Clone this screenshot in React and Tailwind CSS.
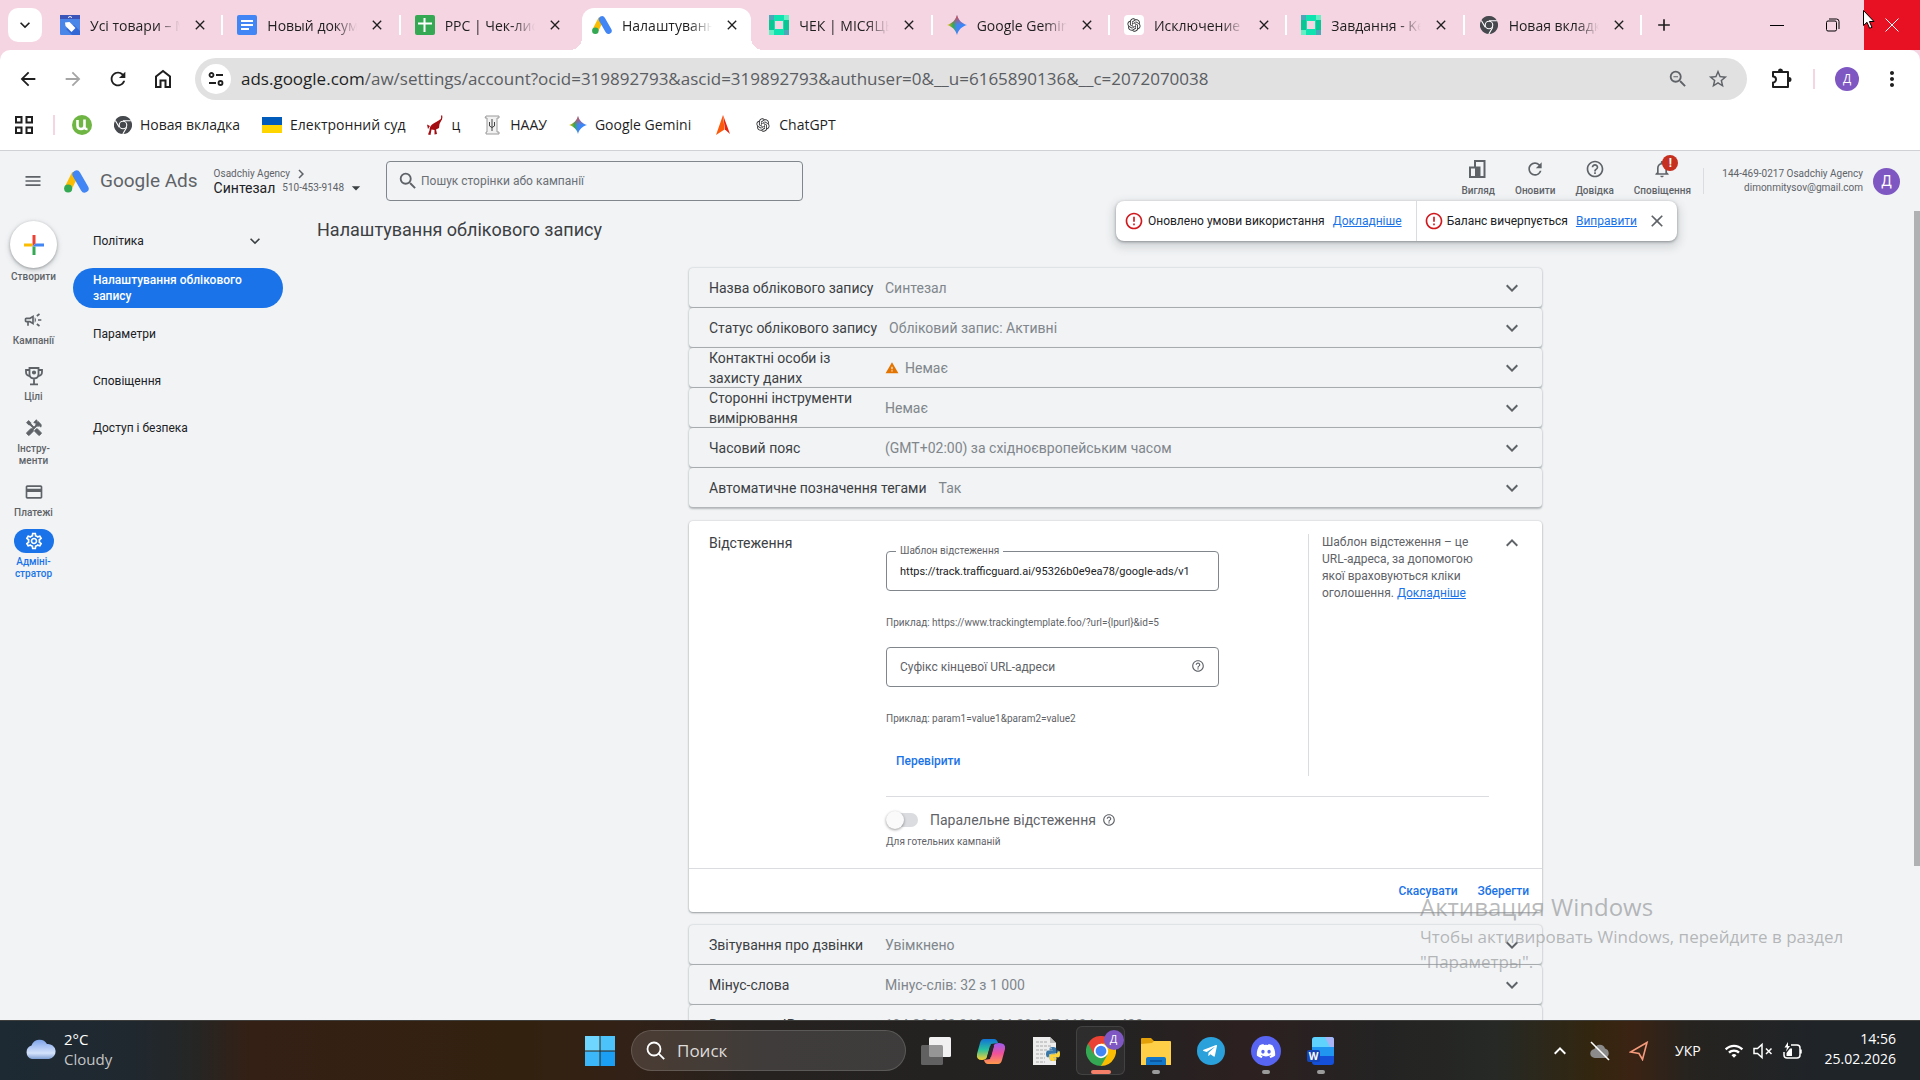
import { useState } from "react";
import {
  MdArrowBack,
  MdArrowForward,
  MdRefresh,
  MdMoreVert,
  MdZoomOut,
  MdStarBorder,
  MdClose,
  MdAdd,
  MdMenu,
  MdSearch,
  MdExpandMore,
  MdExpandLess,
  MdChevronRight,
  MdArrowDropDown,
  MdHelpOutline,
  MdErrorOutline,
  MdNotificationsNone,
  MdOutlineCampaign,
  MdOutlineSettings,
  MdCreditCard,
  MdWarning,
  MdWifi,
} from "react-icons/md";
import { RiOpenaiFill } from "react-icons/ri";
import { FaDiscord, FaTelegramPlane, FaPython } from "react-icons/fa";

const ChromeGlyph = ({ className, color }) => {
  const red = color ? "#ea4335" : "#46494d";
  const yellow = color ? "#fbbc04" : "#46494d";
  const green = color ? "#34a853" : "#46494d";
  return (
    <svg className={className} viewBox="0 0 48 48">
      <path d="M24 24 3.2 12A24 24 0 0 1 44.8 12Z" fill={red} />
      <path d="M24 24 44.8 12A24 24 0 0 1 24 48Z" fill={yellow} />
      <path d="M24 24 24 48A24 24 0 0 1 3.2 12Z" fill={green} />
      <path d="M24 12h20.8L34.4 30Z" fill={yellow} />
      <path d="M34.4 30 24 48 13.6 30Z" fill={green} />
      <path d="M13.6 30 3.2 12 24 12Z" fill={red} />
      {!color && (
        <path
          d="M24 12.5h21M34 30 23.5 48M14 30 3.5 12"
          stroke="#fff"
          strokeWidth="3"
        />
      )}
      <circle cx="24" cy="24" r="11.5" fill="#fff" />
      <circle cx="24" cy="24" r="8.6" fill={color ? "#4285f4" : "#46494d"} />
    </svg>
  );
};

const AdsLogo = ({ className }) => (
  <svg className={className} viewBox="0 0 48 44">
    <path d="M22 7 9 33" stroke="#fbbc04" strokeWidth="14" />
    <path
      d="M24 8.5 39.5 35.5"
      stroke="#4285f4"
      strokeWidth="15.5"
      strokeLinecap="round"
    />
    <circle cx="8" cy="35.5" r="7.8" fill="#34a853" />
  </svg>
);

const GeminiIcon = ({ className }) => (
  <svg className={className} viewBox="0 0 24 24">
    <defs>
      <linearGradient id="gemini" x1="0" y1="0.5" x2="1" y2="0.5">
        <stop offset="0" stopColor="#fbbc04" />
        <stop offset="0.3" stopColor="#34a853" />
        <stop offset="0.5" stopColor="#4285f4" />
        <stop offset="1" stopColor="#3186ff" />
      </linearGradient>
      <linearGradient id="geminiTop" x1="0" y1="0" x2="0" y2="1">
        <stop offset="0" stopColor="#ea4335" />
        <stop offset="0.5" stopColor="#ea4335" stopOpacity="0" />
      </linearGradient>
    </defs>
    <path
      d="M12 0C13.500 6 18 10.500 24 12 18 13.500 13.500 18 12 24 10.500 18 6 13.500 0 12 6 10.500 10.500 6 12 0Z"
      fill="url(#gemini)"
    />
    <path
      d="M12 0C13.500 6 18 10.500 24 12 18 13.500 13.500 18 12 24 10.500 18 6 13.500 0 12 6 10.500 10.500 6 12 0Z"
      fill="url(#geminiTop)"
    />
  </svg>
);

const MerchantIcon = () => (
  <svg className="size-5" viewBox="0 0 20 20">
    <rect width="20" height="20" rx="1" fill="#4a86e8" />
    <path d="M0 0h20v4H0Z" fill="#3c55b8" />
    <path d="M8 2.500q2-2 4 0" stroke="#fff" fill="none" />
    <path d="m14 10 6 6v4h-8l-6-6Z" fill="#3367d6" />
    <path d="M5 7.500 9.500 7l6 6-4 4-6-6Z" fill="#fff" />
  </svg>
);

const DocsIcon = () => (
  <svg className="size-5" viewBox="0 0 20 20">
    <rect width="20" height="20" rx="2" fill="#4285f4" />
    <path d="M4 6h12M4 10h12M4 14h8" stroke="#fff" strokeWidth="2" />
  </svg>
);

const SheetsIcon = () => (
  <svg className="size-5" viewBox="0 0 20 20">
    <rect width="20" height="20" rx="2" fill="#34a853" />
    <path d="M3 8.500h14M9.500 3v14" stroke="#fff" strokeWidth="2" />
  </svg>
);

const KeepIcon = () => (
  <svg className="size-5" viewBox="0 0 20 20">
    <rect width="20" height="20" rx="1.500" fill="#0fe3b0" />
    <path d="M0 5h5v10H0ZM15 5h5v10h-5Z" fill="#08c795" />
    <path d="M0 0h5v5H0ZM15 15h5v5h-5Z" fill="#4aa8b8" />
    <path d="M15 0h5v5h-5ZM0 15h5v5H0Z" fill="#63f0c4" />
    <rect x="6" y="6" width="8" height="8" fill="#f6d5e3" />
  </svg>
);

const OpenAiTab = () => (
  <span className="flex size-5 items-center justify-center rounded bg-white">
    <RiOpenaiFill className="size-4 text-[#2f3033]" />
  </span>
);

const tabs = [
  { id: 1, title: "Усі товари – Merchant", icon: <MerchantIcon /> },
  { id: 2, title: "Новый документ", icon: <DocsIcon /> },
  { id: 3, title: "PPC | Чек-лист", icon: <SheetsIcon /> },
  {
    id: 4,
    title: "Налаштування",
    icon: <AdsLogo className="size-5" />,
    active: true,
  },
  { id: 5, title: "ЧЕК | МІСЯЦЬ", icon: <KeepIcon /> },
  { id: 6, title: "Google Gemini", icon: <GeminiIcon className="size-5" /> },
  { id: 7, title: "Исключение", icon: <OpenAiTab /> },
  { id: 8, title: "Завдання - Keep", icon: <KeepIcon /> },
  { id: 9, title: "Новая вкладка", icon: <ChromeGlyph className="size-[18px]" /> },
];

const Tab = ({ tab, divider }) => (
  <div className="relative min-w-0 flex-1 pt-2">
    {tab.active && (
      <div className="absolute inset-x-1 top-2 bottom-0 rounded-t-xl bg-white">
        <div className="absolute bottom-0 -left-3 size-3 bg-[radial-gradient(circle_at_0_0,#f6d5e3_12px,#fff_12px)]" />
        <div className="absolute -right-3 bottom-0 size-3 bg-[radial-gradient(circle_at_100%_0,#f6d5e3_12px,#fff_12px)]" />
      </div>
    )}
    <div className="relative flex h-[34px] items-center pl-3.5">
      <span className="flex size-5 shrink-0 items-center justify-center">
        {tab.icon}
      </span>
      <span className="ml-2.5 w-[90px] overflow-hidden text-[14px] whitespace-nowrap text-[#1f1f1f] [mask-image:linear-gradient(to_right,black_75%,transparent)]">
        {tab.title}
      </span>
      <button type="button" aria-label="Закрити" className="ml-2.5 p-0.5">
        <MdClose className="size-4 text-[#1f1f1f]" />
      </button>
      {divider && <span className="absolute right-0 h-5 w-0.5 bg-white" />}
    </div>
  </div>
);

const TabStrip = () => (
  <div className="flex h-[50px] shrink-0 bg-[#f6d5e3]">
    <button
      type="button"
      aria-label="Пошук вкладок"
      className="mt-2 ml-2 flex h-[34px] w-[34px] shrink-0 items-center justify-center rounded-[10px] bg-white"
    >
      <MdExpandMore className="size-5 text-[#1f1f1f]" />
    </button>
    <div className="ml-1 flex max-w-[1596px] flex-1">
      {tabs.map((tab) => (
        <Tab key={tab.id} tab={tab} divider={tab.id !== 3 && tab.id !== 4} />
      ))}
    </div>
    <button type="button" aria-label="Нова вкладка" className="ml-3">
      <MdAdd className="size-5 text-[#1f1f1f]" />
    </button>
    <div className="ml-auto flex">
      <button
        type="button"
        aria-label="Згорнути"
        className="flex w-14 items-center justify-center"
      >
        <span className="h-px w-3.5 bg-black" />
      </button>
      <button
        type="button"
        aria-label="Відновити"
        className="mr-[3px] flex w-14 items-center justify-center"
      >
        <svg className="size-3.5" viewBox="0 0 14 14" fill="none" stroke="#000">
          <rect x="0.5" y="3" width="10" height="10" rx="1.500" />
          <path d="M3 1h7.500a2.500 2.500 0 0 1 2.500 2.500V11" />
        </svg>
      </button>
      <button
        type="button"
        aria-label="Закрити вікно"
        className="relative flex w-14 items-center justify-center bg-[#e81123]"
      >
        <svg className="size-3.5" viewBox="0 0 14 14" stroke="#fff">
          <path d="m0.500 0.500 13 13M13.500 0.500l-13 13" />
        </svg>
        <svg
          className="absolute top-2.5 -left-px h-5 w-3"
          viewBox="0 0 12 20"
        >
          <path
            d="M0.500 0.500v15l3.500-3.200 2.600 6 2.400-1-2.600-5.800h4.600Z"
            fill="#fff"
            stroke="#000"
          />
        </svg>
      </button>
    </div>
  </div>
);

const Toolbar = () => (
  <div className="bg-[#f6d5e3]">
    <div className="flex h-[50px] items-center rounded-t-[10px] bg-white pt-2">
      <div className="flex w-[195px] shrink-0 items-center gap-[23px] pl-[17px] text-[#1f1f1f]">
        <button type="button" aria-label="Назад">
          <MdArrowBack className="size-[22px]" />
        </button>
        <button type="button" aria-label="Вперед" className="text-[#a5a5a5]">
          <MdArrowForward className="size-[22px]" />
        </button>
        <button type="button" aria-label="Оновити сторінку">
          <MdRefresh className="size-[22px]" />
        </button>
        <button type="button" aria-label="Головна">
          <svg
            className="size-[22px]"
            viewBox="0 0 22 22"
            fill="none"
            stroke="#1f1f1f"
            strokeWidth="2"
          >
            <path d="M4 8.500 11 3l7 5.500V19h-4.500v-6.500h-5V19H4Z" />
          </svg>
        </button>
      </div>
      <div className="flex h-[42px] min-w-0 flex-1 items-center rounded-full bg-[#e1e1e1] pr-[18px] pl-1.5">
        <span className="flex size-[30px] shrink-0 items-center justify-center rounded-full bg-white">
          <svg
            className="size-4"
            viewBox="0 0 16 16"
            fill="none"
            stroke="#1f1f1f"
            strokeWidth="1.800"
          >
            <circle cx="3.500" cy="4" r="2" />
            <path d="M8 4h7M1 12h7" />
            <circle cx="12.500" cy="12" r="2" />
          </svg>
        </span>
        <p className="ml-2.5 min-w-0 flex-1 truncate text-[17px] text-[#5a5d61]">
          <span className="text-[#1f1f1f]">ads.google.com</span>
          /aw/settings/account?ocid=319892793&amp;ascid=319892793&amp;authuser=0&amp;__u=6165890136&amp;__c=2072070038
        </p>
        <MdZoomOut className="size-[22px] text-[#5f6368]" />
        <MdStarBorder className="ml-[18px] size-[22px] text-[#5f6368]" />
      </div>
      <div className="flex w-[173px] shrink-0 items-center pl-[22px]">
        <svg
          className="size-6"
          viewBox="0 0 24 24"
          fill="none"
          stroke="#1f1f1f"
          strokeWidth="2"
          strokeLinejoin="round"
        >
          <path d="M4 5h15v15H4v-4.500a3 3 0 0 0 0-6Z" />
          <path
            d="M9 4a2.500 2.500 0 0 1 5 0ZM20 10a2.500 2.500 0 0 1 0 5Z"
            fill="#1f1f1f"
            stroke="none"
          />
        </svg>
        <span className="ml-5 h-5 w-0.5 bg-[#f6d5e3]" />
        <span className="ml-5 flex size-6 items-center justify-center rounded-full bg-[#7e57c2] text-xs text-white">
          Д
        </span>
        <MdMoreVert className="ml-[21px] size-6 text-[#1f1f1f]" />
      </div>
    </div>
  </div>
);

const Bookmark = ({ icon, label }) => (
  <a href="#" className="flex items-center gap-2">
    {icon}
    {label}
  </a>
);

const Bookmarks = () => (
  <div className="flex h-[51px] shrink-0 items-center border-b border-[#d0d1d4] bg-white pb-px pl-[15px] text-[14px] text-[#1f1f1f]">
    <svg
      className="size-[18px]"
      viewBox="0 0 18 18"
      fill="none"
      stroke="#1f1f1f"
      strokeWidth="2"
    >
      <path d="M1 1h5.500v5.500H1ZM11.500 1H17v5.500h-5.500ZM1 11.500h5.500V17H1ZM11.500 11.500H17V17h-5.500Z" />
    </svg>
    <span className="ml-5 h-5 w-0.5 bg-[#f6d5e3]" />
    <div className="ml-[17px] flex items-center gap-[22px]">
      <Bookmark
        icon={
          <svg className="size-5" viewBox="0 0 20 20">
            <circle cx="10" cy="10" r="10" fill="#6fb544" />
            <path
              d="M5.500 5v5.500q0 3.500 3.500 3.500t3.500-3.500V4.500v7q0 3 3 2.500"
              fill="none"
              stroke="#fff"
              strokeWidth="2.600"
            />
          </svg>
        }
      />
      <Bookmark
        icon={<ChromeGlyph className="size-[18px]" />}
        label="Новая вкладка"
      />
      <Bookmark
        icon={
          <svg className="h-4 w-5" viewBox="0 0 20 16">
            <path d="M0 0h20v8H0Z" fill="#005bbb" />
            <path d="M0 8h20v8H0Z" fill="#ffd500" />
          </svg>
        }
        label="Електронний суд"
      />
      <Bookmark
        icon={
          <svg className="h-5 w-4" viewBox="2 0 16 20">
            <path
              d="M14.500 5q1-2 1.500 1l-1.500 3-0.500 4-3 1.500 1 4.500-2.500 0.500v-4.500l-3-0.500L5.500 20l-2.500-0.500 1.500-4q0-5 4-7Z"
              fill="#a30d12"
            />
            <path d="M2 9.500 5 11l-2 3Z" fill="#a30d12" />
            <path
              d="M15 6q2.500-2 1.500-5.500"
              stroke="#a30d12"
              strokeWidth="1.200"
              fill="none"
            />
          </svg>
        }
        label="ц"
      />
      <Bookmark
        icon={
          <svg className="size-5" viewBox="0 0 20 20">
            <path
              d="M4 1h13v2h-2v14h2v2H4v-2h1V3H3Z"
              fill="#f1f1f1"
              stroke="#9a9a9a"
            />
            <path
              d="M10 4v12M7.500 7v4l2.500 1.500 2.500-1.500V7"
              fill="none"
              stroke="#444"
            />
          </svg>
        }
        label="НААУ"
      />
      <Bookmark
        icon={<GeminiIcon className="size-[18px]" />}
        label="Google Gemini"
      />
      <Bookmark
        icon={
          <svg className="size-5" viewBox="0 0 20 20">
            <path d="m10 0 7 19-5-4.500Z" fill="#e8200c" />
            <path d="m10 0 1.500 14.500L3 20Z" fill="#fb5a0c" />
          </svg>
        }
      />
      <Bookmark
        icon={<RiOpenaiFill className="size-4 text-[#2f3033]" />}
        label="ChatGPT"
      />
    </div>
  </div>
);

const HeaderAction = ({ icon, label, badge }) => (
  <button
    type="button"
    className="relative flex flex-col items-center text-[10px] leading-3 font-medium text-[#5f6368]"
  >
    <span className="mb-1.5 flex size-5 items-center justify-center">
      {icon}
    </span>
    {label}
    {badge && (
      <span className="absolute -top-1 left-1/2 flex size-4 items-center justify-center rounded-full bg-[#c5301f] text-xs font-bold text-white">
        !
      </span>
    )}
  </button>
);

const AdsHeader = () => (
  <header className="relative flex h-[60px] shrink-0 items-center pr-5 pl-[23px]">
    <button type="button" aria-label="Меню">
      <MdMenu className="size-5 text-[#5f6368]" />
    </button>
    <AdsLogo className="ml-[21px] h-[23px] w-[25px]" />
    <span className="ml-[11px] text-[19px] text-[#5f6368]">Google Ads</span>
    <div className="ml-4 leading-3.5">
      <div className="flex h-3.5 items-center text-[10px] text-[#5f6368]">
        Osadchiy Agency
        <MdChevronRight className="ml-0.5 size-[18px]" />
      </div>
      <div className="flex h-3.5 items-center text-[14px] text-[#202124]">
        Синтезал
        <span className="ml-[7px] text-[10px] text-[#5f6368]">
          510-453-9148
        </span>
        <MdArrowDropDown className="ml-0.5 size-5 text-[#3c4043]" />
      </div>
    </div>
    <label className="ml-5 flex h-10 w-[417px] items-center rounded border border-[#80868b] pl-2.5">
      <MdSearch className="size-[22px] shrink-0 text-[#5f6368]" />
      <input
        type="text"
        placeholder="Пошук сторінки або кампанії"
        className="ml-0.5 w-full bg-transparent text-[12px] outline-none placeholder:text-[#6b7075]"
      />
    </label>
    <div className="mt-2 ml-auto flex gap-5 self-start">
      <HeaderAction
        icon={
          <svg className="size-5" viewBox="0 0 20 20">
            <path
              d="M2 8.500h5V2h9.500v16H2Z"
              fill="none"
              stroke="#5f6368"
              strokeWidth="2"
            />
            <path d="M7 7.500h5.500V18H7Z" fill="#5f6368" />
          </svg>
        }
        label="Вигляд"
      />
      <HeaderAction icon={<MdRefresh className="size-5" />} label="Оновити" />
      <HeaderAction
        icon={<MdHelpOutline className="size-5" />}
        label="Довідка"
      />
      <HeaderAction
        icon={<MdNotificationsNone className="size-5" />}
        label="Сповіщення"
        badge
      />
    </div>
    <div className="ml-3 h-[26px] w-px bg-[#dadce0]" />
    <div className="w-[159px] text-right text-[10px] leading-3.5 text-[#5f6368]">
      144-469-0217 Osadchiy Agency
      <br />
      dimonmitysov@gmail.com
    </div>
    <span className="ml-2.5 flex size-[27px] items-center justify-center rounded-full bg-[#7e57c2] text-sm text-white">
      Д
    </span>
    <Alerts />
  </header>
);

const Alerts = () => (
  <div className="absolute top-[50px] right-[243px] z-10 flex h-10 items-center rounded-lg bg-white text-[12px] text-[#202124] shadow-[0_1px_3px_rgba(60,64,67,0.5),0_4px_8px_3px_rgba(60,64,67,0.15)]">
    <div className="flex h-full items-center border-r border-[#dadce0] pr-3.5 pl-2">
      <MdErrorOutline className="mr-1 size-5 text-[#d01a1e]" />
      Оновлено умови використання
      <a href="#" className="ml-2 text-[#1a73e8] underline">
        Докладніше
      </a>
    </div>
    <div className="flex items-center pr-2.5 pl-[7px]">
      <MdErrorOutline className="mr-[3px] size-5 text-[#d01a1e]" />
      Баланс вичерпується
      <a href="#" className="ml-2 text-[#1a73e8] underline">
        Виправити
      </a>
      <button type="button" aria-label="Закрити" className="ml-2.5">
        <MdClose className="size-5 text-[#5f6368]" />
      </button>
    </div>
  </div>
);

const RailItem = ({ icon, children, active }) => (
  <a
    href="#"
    className={
      active
        ? "flex flex-col items-center text-center text-[10px] leading-3 font-medium text-[#1a73e8]"
        : "flex flex-col items-center text-center text-[10px] leading-3 font-medium text-[#5f6368]"
    }
  >
    <span
      className={
        active
          ? "mb-[3px] flex h-6 w-10 items-center justify-center rounded-full bg-[#1a73e8] text-white"
          : "mb-[3px] flex h-6 w-10 items-center justify-center"
      }
    >
      {icon}
    </span>
    {children}
  </a>
);

const Rail = () => (
  <nav className="flex w-[67px] shrink-0 flex-col items-center pt-2.5">
    <button
      type="button"
      className="flex flex-col items-center text-[10px] leading-3 font-medium text-[#5f6368]"
    >
      <span className="mb-[3px] flex size-[47px] items-center justify-center rounded-full bg-white shadow-[0_1px_3px_rgba(60,64,67,0.4),0_2px_6px_rgba(60,64,67,0.2)]">
        <svg className="size-5" viewBox="0 0 20 20">
          <path d="M8.500 0h3v8.500l-3 3Z" fill="#ea4335" />
          <path d="M0 8.500h8.500v3H0Z" fill="#fbbc04" />
          <path d="M8.500 11.500h3V20h-3Z" fill="#34a853" />
          <path d="M11.500 8.500H20v3H8.500Z" fill="#4285f4" />
        </svg>
      </span>
      Створити
    </button>
    <div className="mt-[25px]">
      <RailItem icon={<MdOutlineCampaign className="size-5" />}>
        Кампанії
      </RailItem>
    </div>
    <div className="mt-[17px] flex flex-col items-center gap-[13px]">
      <RailItem
        icon={
          <svg
            className="size-5"
            viewBox="0 0 20 20"
            fill="none"
            stroke="#5f6368"
            strokeWidth="1.800"
          >
            <path d="M5.500 2h9v6q0 4.500-4.500 4.500T5.500 8ZM5.500 4H2v2q0 3.500 3.500 4M14.500 4H18v2q0 3.500-3.500 4M10 12.500V18M6 18.300h8" />
            <circle cx="10" cy="6.500" r="1.200" fill="#5f6368" />
          </svg>
        }
      >
        Цілі
      </RailItem>
      <RailItem
        icon={
          <svg className="size-[18px]" viewBox="0 0 24 24" fill="#5f6368">
            <path
              d="m21.670 18.170-5.300-5.300h-.990l-2.540 2.540v.990l5.300 5.300c.390.390 1.020.390 1.410 0l2.120-2.120c.390-.380.390-1.020 0-1.410Z"
              stroke="#5f6368"
            />
            <path
              d="m17.340 10.190 1.410-1.410 2.120 2.120c1.170-1.170 1.170-3.070 0-4.240l-3.540-3.540-1.410 1.410V1.710l-.700-.710-3.540 3.540.710.710h2.830l-1.410 1.410 1.060 1.060-2.890 2.890-4.130-4.130V5.060L4.830 2.040 2 4.870 5.030 7.900h1.410l4.130 4.130-.850.850H7.600l-5.300 5.300c-.390.390-.390 1.020 0 1.410l2.120 2.120c.390.390 1.020.390 1.410 0l5.300-5.300v-2.120l5.150-5.150 1.060 1.050Z"
              stroke="#5f6368"
            />
          </svg>
        }
      >
        Інстру-
        <br />
        менти
      </RailItem>
      <RailItem icon={<MdCreditCard className="size-5" />}>Платежі</RailItem>
    </div>
    <div className="mt-2.5">
      <RailItem active icon={<MdOutlineSettings className="size-5" />}>
        Адміні-
        <br />
        стратор
      </RailItem>
    </div>
  </nav>
);

const navLinks = ["Параметри", "Сповіщення", "Доступ і безпека"];

const SideNav = () => (
  <nav className="ml-1.5 w-[210px] shrink-0 pt-2.5 text-[12px] font-[450] text-[#202124]">
    <button
      type="button"
      className="flex h-10 w-full items-center justify-between pr-[18px] pl-5"
    >
      Політика
      <MdExpandMore className="size-5 text-[#3c4043]" />
    </button>
    <a
      href="#"
      className="mt-[7px] flex h-10 items-center rounded-full bg-[#1a73e8] px-5 leading-4 font-medium text-white"
    >
      Налаштування облікового запису
    </a>
    <div className="mt-1.5 flex flex-col gap-[7px]">
      {navLinks.map((link) => (
        <a key={link} href="#" className="flex h-10 items-center px-5">
          {link}
        </a>
      ))}
    </div>
  </nav>
);

const SettingRow = ({ label, value, icon, wide }) => (
  <button
    type="button"
    className="flex h-10 w-full items-center rounded border-b border-[#b4b7ba] bg-[#f1f3f5] pr-[18px] pl-5 text-left text-[14px] leading-5 shadow-[0_1px_2px_rgba(60,64,67,0.25),0_0_2px_rgba(60,64,67,0.25)]"
  >
    <span
      className={
        wide
          ? "pr-3 font-[450] whitespace-nowrap text-[#3c4043]"
          : "w-[176px] shrink-0 pr-1 font-[450] text-[#3c4043]"
      }
    >
      {label}
    </span>
    {icon}
    <span className="whitespace-nowrap text-[#80868b]">{value}</span>
    <MdExpandMore className="ml-auto size-6 shrink-0 text-[#5f6368]" />
  </button>
);

const TrackingCard = () => {
  const [template, setTemplate] = useState(
    "https://track.trafficguard.ai/95326b0e9ea78/google-ads/v1"
  );
  const [suffix, setSuffix] = useState("");
  const [parallel, setParallel] = useState(false);

  return (
    <section className="my-[13px] rounded bg-white text-[#5f6368] shadow-[0_1px_2px_rgba(60,64,67,0.45),0_0_2px_rgba(60,64,67,0.2)]">
      <div className="flex h-[347px] pr-[18px] pl-5">
        <h2 className="w-[177px] shrink-0 pt-3 text-[14px] leading-5 font-[450] text-[#3c4043]">
          Відстеження
        </h2>
        <div className="flex-1">
          <div className="flex border-b border-[#dadce0] pt-[13px] pb-5">
            <div className="h-[242px] flex-1 pt-[17px] text-[10px]">
              <div className="relative w-[333px]">
                <label
                  htmlFor="template"
                  className="absolute -top-1.5 left-2.5 bg-white px-1 leading-3"
                >
                  Шаблон відстеження
                </label>
                <input
                  id="template"
                  type="text"
                  value={template}
                  onChange={(e) => setTemplate(e.target.value)}
                  className="h-10 w-full rounded border border-[#80868b] px-[13px] text-[11px] text-[#202124] outline-none"
                />
              </div>
              <p className="mt-[26px] leading-3">
                Приклад: https://www.trackingtemplate.foo/?url=&#123;lpurl&#125;&amp;id=5
              </p>
              <div className="relative mt-[18px] w-[333px]">
                <input
                  type="text"
                  aria-label="Суфікс кінцевої URL-адреси"
                  placeholder="Суфікс кінцевої URL-адреси"
                  value={suffix}
                  onChange={(e) => setSuffix(e.target.value)}
                  className="h-10 w-full rounded border border-[#80868b] pr-8 pl-[13px] text-[12px] outline-none placeholder:text-[#5f6368]"
                />
                <MdHelpOutline className="absolute top-3 right-3.5 size-3.5" />
              </div>
              <p className="mt-[26px] leading-3">
                Приклад: param1=value1&amp;param2=value2
              </p>
              <button
                type="button"
                className="mt-7 ml-2.5 text-[12px] leading-4 font-medium text-[#1a73e8]"
              >
                Перевірити
              </button>
            </div>
            <p className="h-[242px] w-[181px] border-l border-[#dadce0] pl-[13px] text-[12px] leading-[17px]">
              Шаблон відстеження – це URL-адреса, за допомогою якої враховуються
              кліки оголошення.{" "}
              <a href="#" className="text-[#1a73e8] underline">
                Докладніше
              </a>
            </p>
          </div>
          <div className="mt-[11px] flex items-center">
            <input
              id="parallel"
              type="checkbox"
              role="switch"
              checked={parallel}
              onChange={(e) => setParallel(e.target.checked)}
              className="relative h-3.5 w-8 appearance-none rounded-full bg-[#dadce0] before:absolute before:-top-0.5 before:left-0 before:size-[18px] before:rounded-full before:bg-[#fafafa] before:shadow-[0_1px_3px_rgba(0,0,0,0.4)] checked:bg-[#8ab4f8] checked:before:left-[14px] checked:before:bg-[#1a73e8]"
            />
            <label
              htmlFor="parallel"
              className="ml-3 text-[14px] leading-6 font-[450]"
            >
              Паралельне відстеження
            </label>
            <MdHelpOutline className="ml-1.5 size-3.5" />
          </div>
          <p className="mt-1 text-[10px] leading-3">Для готельних кампаній</p>
        </div>
        <button
          type="button"
          aria-label="Згорнути"
          className="ml-[11px] flex h-11 items-center self-start"
        >
          <MdExpandLess className="size-6" />
        </button>
      </div>
      <div className="flex h-11 items-center justify-end gap-5 border-t border-[#dadce0] pr-[13px] text-[12px] font-medium text-[#1a73e8]">
        <button type="button">Скасувати</button>
        <button type="button">Зберегти</button>
      </div>
    </section>
  );
};

const Settings = () => (
  <main className="min-w-0 flex-1 overflow-hidden pl-[34px]">
    <h1 className="pt-[7px] text-[18px] leading-6 text-[#3c4043]">
      Налаштування облікового запису
    </h1>
    <div className="mx-auto mt-[26px] max-w-[853px]">
      <SettingRow label="Назва облікового запису" value="Синтезал" />
      <SettingRow
        label="Статус облікового запису"
        value="Обліковий запис: Активні"
        wide
      />
      <SettingRow
        label="Контактні особи із захисту даних"
        value="Немає"
        icon={<MdWarning className="mr-1.5 size-3.5 text-[#e37400]" />}
      />
      <SettingRow label="Сторонні інструменти вимірювання" value="Немає" />
      <SettingRow
        label="Часовий пояс"
        value="(GMT+02:00) за східноєвропейським часом"
      />
      <SettingRow label="Автоматичне позначення тегами" value="Так" wide />
      <TrackingCard />
      <SettingRow label="Звітування про дзвінки" value="Увімкнено" />
      <SettingRow label="Мінус-слова" value="Мінус-слів: 32 з 1 000" />
      <SettingRow
        label="Вилучення IP-адрес"
        value="194.28.182.219, 194.28.147.113 і ще 423"
      />
    </div>
  </main>
);

const TaskButton = ({ label, children, indicator, active }) => (
  <button
    type="button"
    aria-label={label}
    className="relative flex w-[55px] items-center justify-center"
  >
    {active && (
      <span className="absolute inset-x-[3px] inset-y-[5px] rounded-md border border-white/10 bg-white/5" />
    )}
    <span className="relative">{children}</span>
    {indicator && (
      <span className="absolute bottom-1.5 h-1 w-2 rounded-full bg-[#9b9b9b]" />
    )}
    {active && (
      <span className="absolute bottom-1.5 h-1 w-5 rounded-full bg-[#f4806a]" />
    )}
  </button>
);

const Taskbar = () => (
  <footer className="relative flex h-[60px] shrink-0 items-stretch border-t border-[#3f403e] bg-[linear-gradient(90deg,#1d2a33_0%,#20282f_7%,#252625_10%,#342015_13%,#33210f_27%,#332116_32%,#252220_40%,#232222_58%,#2d2020_65%,#242323_72%,#262925_78%,#33260f_83%,#3b2313_85%,#26231f_88%,#1f2429_95%)] text-white">
    <div className="flex w-[572px] items-center pb-1 pl-[25px]">
      <svg className="h-[21px] w-[31px]" viewBox="0 0 31 21">
        <defs>
          <linearGradient id="cloud" x1="0" y1="0" x2="0" y2="1">
            <stop offset="0" stopColor="#7ea3ea" />
            <stop offset="0.7" stopColor="#d5e3fb" />
            <stop offset="1" stopColor="#7f9fd4" />
          </linearGradient>
        </defs>
        <path
          d="M7 21a7 7 0 0 1-0.500-13.500A8.500 8.500 0 0 1 22 6a7.500 7.500 0 0 1 2 15Z"
          fill="url(#cloud)"
        />
      </svg>
      <div className="ml-2 text-[15px] leading-5">
        2°C
        <div className="text-[#c5c5c5]">Cloudy</div>
      </div>
    </div>
    <TaskButton label="Пуск">
      <svg className="size-[30px]" viewBox="0 0 30 30">
        <path d="M0 0h14.500v14.500H0Z" fill="#6fd6ff" />
        <path d="M15.500 0H30v14.500H15.500Z" fill="#4cc4fb" />
        <path d="M0 15.500h14.500V30H0Z" fill="#3cb8fa" />
        <path d="M15.500 15.500H30V30H15.500Z" fill="#1a9ff5" />
      </svg>
    </TaskButton>
    <label className="my-[9px] ml-1 flex w-[275px] items-center rounded-full border border-white/15 bg-white/12 pl-3.5">
      <svg
        className="size-[19px] shrink-0"
        viewBox="0 0 19 19"
        fill="none"
        stroke="#fff"
        strokeWidth="1.800"
      >
        <circle cx="8" cy="8" r="6.500" />
        <path d="m12.700 12.700 5.500 5.500" />
      </svg>
      <input
        type="text"
        placeholder="Поиск"
        className="ml-3 w-full bg-transparent text-[17px] outline-none placeholder:text-[#dedbda]"
      />
    </label>
    <div className="ml-0.5 flex">
      <TaskButton label="Подання завдань">
        <svg className="size-[30px]" viewBox="0 0 30 30">
          <rect x="8" y="1" width="22" height="20" rx="1.500" fill="#f1f1f1" />
          <rect
            y="9"
            width="22"
            height="20"
            rx="1.500"
            fill="#777"
            fillOpacity="0.750"
          />
        </svg>
      </TaskButton>
      <TaskButton label="Copilot">
        <svg className="size-[30px]" viewBox="0 0 30 30">
          <defs>
            <linearGradient id="copilotLeft" x1="0" y1="0" x2="0" y2="1">
              <stop offset="0" stopColor="#1273d6" />
              <stop offset="0.5" stopColor="#27c0a0" />
              <stop offset="1" stopColor="#ffd02f" />
            </linearGradient>
            <linearGradient id="copilotRight" x1="0" y1="0" x2="0" y2="1">
              <stop offset="0" stopColor="#9a5cf0" />
              <stop offset="0.5" stopColor="#f0519a" />
              <stop offset="1" stopColor="#ff9a4a" />
            </linearGradient>
          </defs>
          <path
            d="M8 3h10q3 0 4 4l-7 1-4 13q-1 3-5 3-6 0-5-6L4 7q1-4 4-4Z"
            fill="url(#copilotLeft)"
          />
          <path
            d="M22 28H12q-3 0-4-4l6-1L18 9q1-2 5-2 7 0 6 6l-3 11q-1 4-4 4Z"
            fill="url(#copilotRight)"
          />
          <path d="M14 10h4l-3 11h-4Z" fill="#27242a" />
        </svg>
      </TaskButton>
      <TaskButton label="Python">
        <svg className="size-[30px]" viewBox="0 0 30 30">
          <path d="M2 1h17l6 6v22H2Z" fill="#ededed" />
          <path d="M19 1v6h6Z" fill="#bcbcbc" />
          <path
            d="M5 6h12M5 10h16M5 14h11M5 18h9M5 22h9M5 26h9"
            stroke="#a9a9a9"
            strokeDasharray="3 1"
          />
        </svg>
        <FaPython className="absolute right-0 bottom-1 size-4 text-[#3a77a8]" />
        <FaPython className="absolute right-0 bottom-1 size-4 text-[#ffd43b] [clip-path:polygon(100%_25%,100%_100%,20%_100%,30%_55%,75%_50%)]" />
      </TaskButton>
      <TaskButton label="Chrome" active>
        <ChromeGlyph color className="size-[30px]" />
        <span className="absolute -top-1.5 -right-2 flex size-5 items-center justify-center rounded-full bg-[#7e57c2] text-[11px]">
          Д
        </span>
      </TaskButton>
      <TaskButton label="Провідник" indicator>
        <svg className="size-[30px]" viewBox="0 0 30 30">
          <path d="M0 3q0-1 1-1h9l3 3h16v10H0Z" fill="#e3a008" />
          <path d="M0 8l11-1 2-2h16q1 0 1 1v23H0Z" fill="#ffcf48" />
          <path d="M5 29v-6q0-2 2-2h16q2 0 2 2v6Z" fill="#1277c9" />
          <path d="M9 25h12" stroke="#0a4f96" strokeWidth="1.500" />
        </svg>
      </TaskButton>
      <TaskButton label="Telegram">
        <span className="flex size-7 items-center justify-center rounded-full bg-[#2aa1da]">
          <FaTelegramPlane className="mr-0.5 size-4" />
        </span>
      </TaskButton>
      <TaskButton label="Discord" indicator>
        <span className="flex size-[30px] items-center justify-center rounded-full bg-[#5865f2]">
          <FaDiscord className="size-5" />
        </span>
      </TaskButton>
      <TaskButton label="Word" indicator>
        <svg className="size-7" viewBox="0 0 28 28">
          <rect x="5" width="22" height="28" rx="3" fill="#1450d8" />
          <path d="M5 10h22v9H5Z" fill="#2196f0" />
          <path d="M5 10V3q0-3 3-3h16q3 0 3 3v7Z" fill="#5fd3fb" />
          <path d="M18 0h6q3 0 3 3v7h-4Z" fill="#a9b4f6" />
          <rect y="13" width="13" height="12" rx="2" fill="#1546b8" />
          <text
            x="6.500"
            y="22.500"
            fontSize="10"
            fontWeight="700"
            textAnchor="middle"
            fill="#fff"
          >
            W
          </text>
        </svg>
      </TaskButton>
    </div>
    <div className="ml-auto flex items-center pr-6 text-[14px]">
      <MdExpandLess className="size-6" />
      <svg className="ml-[18px] size-5" viewBox="0 0 20 20">
        <path
          d="M5 17a4.500 4.500 0 0 1-0.500-9A5.500 5.500 0 0 1 15 7.500 5 5 0 0 1 15.500 17Z"
          fill="#8b8b8b"
        />
        <path d="m1 1 18 18" stroke="#fff" strokeWidth="1.600" />
      </svg>
      <svg
        className="ml-[19px] size-5"
        viewBox="0 0 20 20"
        fill="none"
        stroke="#f59b7c"
        strokeWidth="1.600"
      >
        <path d="M18 1.500 1.500 11l8.500 1.500 3.500 6Z" />
      </svg>
      <span className="ml-[26px]">УКР</span>
      <MdWifi className="ml-[23px] size-5" />
      <svg
        className="ml-[9px] size-5"
        viewBox="0 0 20 20"
        fill="none"
        stroke="#fff"
        strokeWidth="1.500"
      >
        <path d="M1 7.500h3.500L9 3.500v13l-4.500-4H1ZM13 7.500l5.500 5.500M18.500 7.500 13 13" />
      </svg>
      <svg
        className="ml-2.5 size-5"
        viewBox="0 0 20 20"
        fill="none"
        stroke="#fff"
        strokeWidth="1.500"
      >
        <path d="M8 4h6q3 0 3 3v7q0 3-3 3H4q-3 0-3-3v-3M18 8.500v4" />
        <path d="M5 1 1.500 6.500h2.500L3 10.500 7 5H5Z" fill="#fff" stroke="none" />
        <path d="M3.500 12 7 7.500h2v7.500H3.500Z" fill="#fff" stroke="none" />
      </svg>
      <div className="ml-[22px] pb-1 text-right leading-5">
        14:56
        <br />
        25.02.2026
      </div>
    </div>
  </footer>
);

const App = () => {
  return (
    <div className="flex h-screen flex-col overflow-hidden font-['Open_Sans',sans-serif]">
      <TabStrip />
      <Toolbar />
      <Bookmarks />
      <div className="relative flex min-h-0 flex-1 flex-col bg-[#f1f3f5] font-[Roboto,sans-serif]">
        <AdsHeader />
        <div className="flex min-h-0 flex-1">
          <Rail />
          <SideNav />
          <Settings />
          <div className="w-1.5 shrink-0">
            <div className="h-[81%] bg-[#afb1b3]" />
          </div>
        </div>
        {/* activation notice floats above every window */}
        <div className="pointer-events-none absolute right-[60px] bottom-[46px] w-[440px] font-['Open_Sans',sans-serif] text-[17px] leading-[25px] text-[#8a8c8e]/60">
          <p className="text-[24px] leading-[34px]">Активация Windows</p>
          <p>
            Чтобы активировать Windows, перейдите в раздел
            <br />
            "Параметры".
          </p>
        </div>
      </div>
      <Taskbar />
    </div>
  );
};

export default App;
